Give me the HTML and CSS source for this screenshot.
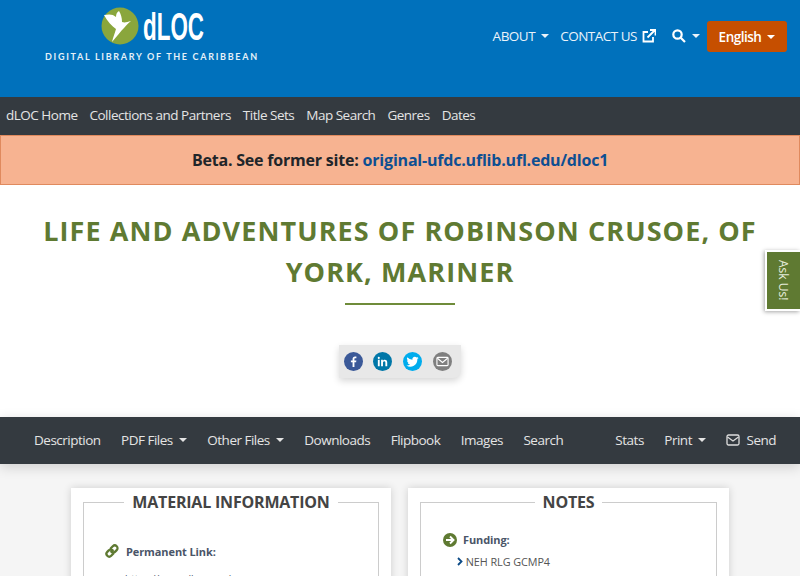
FILE: index.html
```html
<!DOCTYPE html>
<html lang="en">

<head>
  <meta charset="UTF-8">
  <title>dLOC - Life and Adventures of Robinson Crusoe</title>
  <link rel="stylesheet" href="styles.css">
</head>

<body>

  <header class="top">
    <div class="logo">
      <div class="logo-mark">
        <svg class="bird" width="38" height="38" viewBox="0 0 38 38">
          <circle cx="19" cy="19" r="18.5" fill="#8aa63c"/>
          <path d="M3 8 C8 7 12 7 15 10 C15 7 16 5 18 4 C20 7 21 11 21 15 C24 16 26 15 30 14 C27 16 25 19 23 21 C20 24 16 29 11 35 C12 30 14 26 15 22 C11 19 6 14 3 8 Z" fill="#fff"/>
        </svg>
        <span class="logo-name">dLOC</span>
      </div>
      <div class="logo-sub">DIGITAL LIBRARY OF THE CARIBBEAN</div>
    </div>
    <nav class="top-links">
      <a class="caret">ABOUT</a>
      <a>CONTACT US
        <svg width="14" height="14" viewBox="0 0 14 14" fill="none" stroke="#fff" stroke-width="1.8">
          <path d="M11 8v4.500H1.500V3H6"/>
          <path d="M5.500 8.500L12.500 1.500M8 1h5.500v5.500" />
        </svg>
      </a>
      <a class="caret search">
        <svg width="14" height="14" viewBox="0 0 14 14" fill="none" stroke="#fff" stroke-width="2.200">
          <circle cx="5.500" cy="5.500" r="4.200"/>
          <path d="M8.700 8.700L13 13"/>
        </svg>
      </a>
      <button class="lang caret">English</button>
    </nav>
  </header>

  <nav class="main-nav">
    <a>dLOC Home</a>
    <a>Collections and Partners</a>
    <a>Title Sets</a>
    <a>Map Search</a>
    <a>Genres</a>
    <a>Dates</a>
  </nav>

  <div class="beta">Beta. See former site: <a>original-ufdc.uflib.ufl.edu/dloc1</a></div>

  <main class="title-area">
    <h1>LIFE AND ADVENTURES OF ROBINSON CRUSOE, OF YORK, MARINER</h1>
    <div class="rule"></div>
    <div class="share">
      <span class="share-btn fb">
        <svg width="14" height="14" viewBox="0 0 14 14"><path d="M8 13V7.800h1.800l.3-2H8V4.500c0-.6.200-1 1-1h1.100V1.700C9.800 1.600 9.300 1.600 8.700 1.600 7.100 1.600 6 2.500 6 4.300v1.500H4.200v2H6V13z" fill="#fff"/></svg>
      </span>
      <span class="share-btn li">
        <svg width="14" height="14" viewBox="0 0 14 14"><path d="M2 5.200h2V12H2zM3 2a1.100 1.100 0 1 1 0 2.300A1.100 1.100 0 0 1 3 2zM5.500 5.200h1.900v.9c.4-.6 1.100-1.100 2.100-1.100 2 0 2.600 1.300 2.600 3.100V12h-2V8.500c0-.9-.2-1.700-1.200-1.700s-1.400.8-1.400 1.700V12h-2z" fill="#fff"/></svg>
      </span>
      <span class="share-btn tw">
        <svg width="14" height="14" viewBox="0 0 14 14"><path d="M13.500 3.100c-.5.200-1 .4-1.500.4.500-.3 1-.8 1.200-1.400-.5.300-1.100.5-1.700.6A2.700 2.700 0 0 0 6.900 5.200 7.600 7.600 0 0 1 1.400 2.400a2.700 2.700 0 0 0 .8 3.600c-.4 0-.8-.1-1.200-.3 0 1.300.9 2.400 2.100 2.700-.4.100-.8.100-1.200 0 .3 1.100 1.300 1.800 2.500 1.900A5.400 5.400 0 0 1 .5 11.400 7.600 7.600 0 0 0 12.200 4.600c.5-.4 1-.9 1.300-1.500z" fill="#fff"/></svg>
      </span>
      <span class="share-btn mail">
        <svg width="14" height="12" viewBox="0 0 14 12" fill="none" stroke="#fff" stroke-width="1.200"><rect x="1" y="1.500" width="12" height="9" rx="1"/><path d="M1.500 2.500L7 7l5.500-4.500"/></svg>
      </span>
    </div>
  </main>

  <nav class="toolbar">
    <div class="tool-group">
      <a>Description</a>
      <a class="caret">PDF Files</a>
      <a class="caret">Other Files</a>
      <a>Downloads</a>
      <a>Flipbook</a>
      <a>Images</a>
      <a>Search</a>
    </div>
    <div class="tool-group">
      <a>Stats</a>
      <a class="caret">Print</a>
      <a class="send">
        <svg width="14" height="12" viewBox="0 0 14 12" fill="none" stroke="#ddd" stroke-width="1.300"><rect x="1" y="1" width="12" height="10" rx="1.500"/><path d="M1.500 3L7 7l5.500-4"/></svg>
        Send
      </a>
    </div>
  </nav>

  <section class="content">
    <div class="card">
      <fieldset>
        <legend>MATERIAL INFORMATION</legend>
        <div class="field link-field">
          <svg class="field-icon" width="16" height="16" viewBox="0 0 16 16" fill="none" stroke="#5f7a32" stroke-width="2.300" stroke-linecap="round">
            <path d="M6.800 5.200l2-2a2.700 2.700 0 0 1 3.900 3.900l-1.500 1.500a2.700 2.700 0 0 1-3.900 0"/>
            <path d="M9.200 10.800l-2 2a2.700 2.700 0 0 1-3.900-3.900l1.500-1.500a2.700 2.700 0 0 1 3.900 0"/>
          </svg>
          <b>Permanent Link:</b>
        </div>
        <div class="value">https://www.dloc.com/</div>
      </fieldset>
    </div>
    <div class="card">
      <fieldset>
        <legend>NOTES</legend>
        <div class="field notes-field">
          <svg class="field-icon" width="14" height="14" viewBox="0 0 14 14">
            <circle cx="7" cy="7" r="7" fill="#5f7a32"/>
            <path d="M3 7h7M7 3.500L10.500 7 7 10.500" fill="none" stroke="#fff" stroke-width="1.900"/>
          </svg>
          <b>Funding:</b>
        </div>
        <div class="note-item">
          <svg width="6" height="9" viewBox="0 0 6 9" fill="none" stroke="#0b4a86" stroke-width="1.800"><path d="M1 1l3.500 3.500L1 8"/></svg>
          NEH RLG GCMP4
        </div>
      </fieldset>
    </div>
  </section>

  <a class="ask">Ask Us!</a>

</body>

</html>
```

FILE: styles.css
```css
html,
body {
  height: 576px;
  overflow: hidden;
}

body {
  margin: 0;
  font-family: "Open Sans", sans-serif;
  font-size: 13.500px;
  letter-spacing: -0.500px;
  background-color: #f5f5f5;
  position: relative;
}

a {
  text-decoration: none;
  color: inherit;
  white-space: nowrap;
}

.caret::after {
  content: "";
  display: inline-block;
  margin-left: 6px;
  vertical-align: 3px;
  border-top: 4px solid currentColor;
  border-left: 4px solid transparent;
  border-right: 4px solid transparent;
}

.top {
  height: 97px;
  background: #0071bc;
  color: #fff;
  display: flex;
  justify-content: space-between;
}

.logo {
  margin-left: 45px;
  padding-top: 7px;
  width: 213px;
}

.logo-mark {
  display: flex;
  align-items: center;
  margin-left: 56px;
  height: 38px;
}

.logo-name {
  font-family: "Liberation Sans", sans-serif;
  font-weight: bold;
  font-size: 38px;
  letter-spacing: 0;
  margin: 3px 0 0 4px;
  transform: scaleX(0.59);
  transform-origin: left center;
}

.logo-sub {
  font-family: "Lato", sans-serif;
  font-size: 9px;
  font-weight: 700;
  letter-spacing: 1.700px;
  margin-top: 6px;
  white-space: nowrap;
  color: #e4f0f8;
}

.top-links {
  display: flex;
  align-items: center;
  align-self: flex-start;
  height: 31px;
  margin-top: 21px;
  margin-right: 13px;
  color: #eaf3fa;
}

.top-links a {
  display: flex;
  align-items: center;
  margin-right: 11px;
  margin-top: -2px;
}

.top-links a svg {
  margin-left: 5px;
}

.top-links .search {
  margin-left: 5px;
  margin-right: 7px;
}

.top-links .search svg {
  margin-left: 0;
}

.lang {
  height: 31px;
  width: 80px;
  padding: 0;
  background: #c64f00;
  color: #fff;
  border: none;
  border-radius: 3px;
  font-family: "Open Sans", sans-serif;
  font-size: 13.500px;
  letter-spacing: -0.500px;
  font-weight: 600;
}

.main-nav {
  height: 38px;
  background: #343a40;
  color: #e4e4e4;
  display: flex;
  align-items: center;
  gap: 12px;
  padding-left: 6px;
  padding-bottom: 2px;
  box-sizing: border-box;
}

.beta {
  height: 50px;
  box-sizing: border-box;
  background: #f7b391;
  border: 1px solid #e08a5e;
  color: #212529;
  font-size: 16px;
  letter-spacing: -0.200px;
  font-weight: 700;
  text-align: center;
  line-height: 49px;
}

.beta a {
  color: #0e4f92;
}

.title-area {
  background: #fff;
  height: 232px;
  text-align: center;
  overflow: hidden;
}

h1 {
  margin: 25px 28px 0;
  font-size: 27px;
  line-height: 41px;
  font-weight: 700;
  letter-spacing: 1.090px;
  color: #5f7a32;
}

.rule {
  width: 110px;
  height: 2px;
  background: #6f8c3a;
  margin: 11px auto 0;
}

.share {
  display: flex;
  width: 122px;
  height: 33px;
  margin: 40px auto 0;
  box-sizing: border-box;
  padding: 7px 0 0 4.500px;
  gap: 10.700px;
  background: #e8e8e8;
  border-bottom-right-radius: 8px;
  box-shadow: 0 3px 7px rgba(0, 0, 0, 0.16);
}

.share-btn {
  width: 19px;
  height: 19px;
  border-radius: 50%;
  display: flex;
  align-items: center;
  justify-content: center;
}

.share-btn svg {
  width: 13px;
  height: 13px;
}

.fb {
  background: #3b5998;
}

.li {
  background: #0077a8;
}

.tw {
  background: #00aced;
}

.mail {
  background: #7f7f7f;
}

.toolbar {
  height: 47px;
  background: #343a40;
  color: #e4e4e4;
  display: flex;
  justify-content: space-between;
  align-items: center;
  padding: 0 24px 2px 34px;
  box-sizing: border-box;
  box-shadow: 0 3px 12px rgba(0, 0, 0, 0.16);
  position: relative;
}

.tool-group {
  display: flex;
  gap: 20.500px;
}

.send svg {
  margin-right: 3px;
  vertical-align: -1px;
}

.content {
  display: flex;
  gap: 17px;
  padding: 24px 0 0 71px;
}

.card {
  width: 296px;
  height: 200px;
  padding: 0 12px;
  background: #fff;
  box-shadow: 0 0 8px rgba(0, 0, 0, 0.16);
}

.card + .card {
  width: 297px;
}

fieldset {
  margin: 0;
  padding: 0;
  border: 1px solid #ccc;
  height: 100%;
  box-sizing: border-box;
}

legend {
  margin: 0 auto;
  padding: 0 8px;
  font-size: 16px;
  letter-spacing: -0.200px;
  font-weight: 700;
  line-height: 28px;
  color: #444;
}

.field {
  display: flex;
  align-items: center;
  gap: 6px;
  font-size: 11px;
  letter-spacing: -0.100px;
  color: #4a5568;
}

.link-field {
  margin: 27px 0 0 20px;
}

.notes-field {
  margin: 16px 0 0 22px;
}

.value {
  font-size: 10px;
  letter-spacing: 0;
  color: #4a5568;
  margin: 13px 0 0 41px;
}

.note-item {
  font-size: 10.800px;
  letter-spacing: -0.050px;
  color: #555;
  margin: 7px 0 0 36px;
}

.ask {
  position: absolute;
  top: 250px;
  right: 0;
  width: 35px;
  height: 61px;
  background: #5f7a32;
  color: #e6ecdc;
  font-size: 12px;
  letter-spacing: 0;
  writing-mode: vertical-rl;
  display: flex;
  align-items: center;
  justify-content: center;
  border: 2px solid #fff;
  border-right: none;
  box-sizing: border-box;
  box-shadow: -1px 1px 4px rgba(0, 0, 0, 0.35);
}
```
